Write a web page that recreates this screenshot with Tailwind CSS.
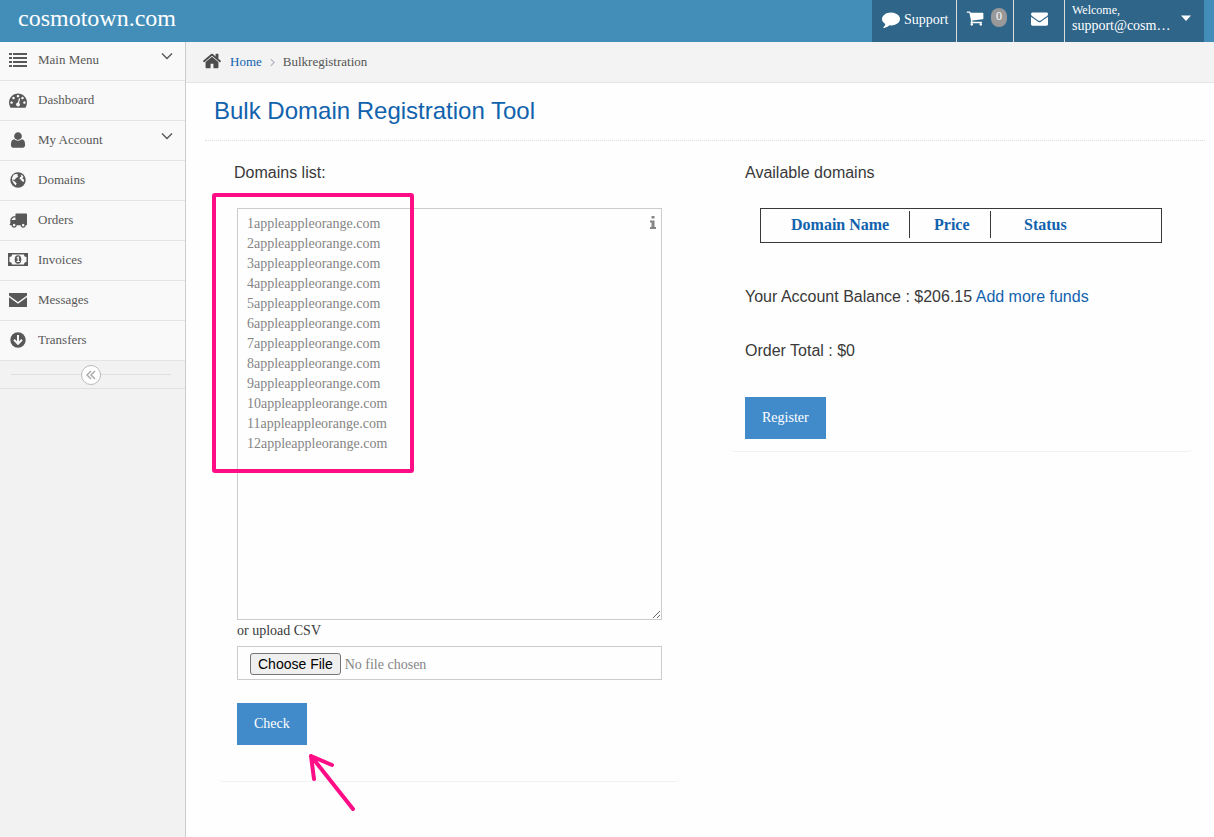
<!DOCTYPE html>
<html lang="en">

<head>
    <meta charset="UTF-8">
    <meta name="viewport" content="width=device-width, initial-scale=1.0">
    <title>Bulk Domain Registration Tool - cosmotown.com</title>
    <script src="https://cdn.jsdelivr.net/npm/@tailwindcss/browser@4"></script>
</head>

<body class="min-h-screen flex flex-col bg-[#fefefe] font-['Liberation_Serif',serif] text-[13px] leading-5 text-[#393939]">
    <!-- Top bar -->
    <header class="h-[42px] shrink-0 flex justify-between bg-[#438eb9] text-white pl-[18px] pr-[10px]">
        <a href="#" class="text-2xl leading-9">cosmotown.com</a>
        <nav class="flex bg-[#2e6589]">
            <a href="#" class="w-[84px] flex items-center pl-[10px] gap-1 pb-1 text-sm">
                <svg class="w-[18px] h-[18px]" viewBox="0 0 1792 1792" fill="currentColor"><path d="M1792 896q0 174-120 321.5t-326 233-450 85.5q-70 0-145-8-198 175-460 242-49 14-114 22-17 2-30.5-9t-17.5-29v-1q-3-4-.5-12t2-10 4.5-9.5l6-9 7-8.5 8-9q7-8 31-34.5t34.5-38 31-39.5 32.5-51 27-59 26-76q-157-89-247.5-220t-90.5-281q0-130 71-248.5t191-204.5 286-136.5 348-50.5q244 0 450 85.5t326 233 120 321.5z"/></svg>
                <span class="pt-px">Support</span>
            </a>
            <a href="#" class="w-[57px] flex items-center border-l border-[#ddd] pl-[9px] gap-[7px] pb-1.5">
                <svg class="w-[18px] h-[18px]" viewBox="0 0 1792 1792" fill="currentColor"><path d="M704 1536q0 52-38 90t-90 38-90-38-38-90 38-90 90-38 90 38 38 90zm896 0q0 52-38 90t-90 38-90-38-38-90 38-90 90-38 90 38 38 90zm128-1088v512q0 24-16.5 42.5t-40.5 21.5l-1044 122q13 60 13 70 0 16-24 64h920q26 0 45 19t19 45-19 45-45 19h-1024q-26 0-45-19t-19-45q0-11 8-31.5t16-36 21.5-40 15.5-29.5l-177-823h-204q-26 0-45-19t-19-45 19-45 45-19h256q16 0 28.5 6.5t19.5 15.5 13 24.5 8 26 5.5 29.5 4.5 26h1201q26 0 45 19t19 45z"/></svg>
                <span class="w-4 h-[19px] mb-0.5 rounded-full bg-[#999] text-center text-xs leading-4">0</span>
            </a>
            <a href="#" aria-label="Messages" class="w-[51px] flex items-center justify-center border-l border-[#ddd] pb-1.5">
                <svg class="w-[17px] h-[17px]" viewBox="0 0 1792 1792" fill="currentColor"><path d="M1792 710v794q0 66-47 113t-113 47h-1472q-66 0-113-47t-47-113v-794q44 49 101 87 362 246 497 345 57 42 92.5 65.5t94.5 48 110 24.5h2q51 0 110-24.5t94.5-48 92.5-65.5q170-123 498-345 57-39 100-87zm0-294q0 79-49 151t-122 123q-376 261-468 325-10 7-42.5 31t-54 38.5-52 32.5-57.5 27-50 9h-2q-23 0-50-9t-57.5-27-52-32.5-54-38.5-42.5-31q-91-64-262-182.5t-205-142.5q-62-42-117-115.5t-55-136.5q0-78 41.5-130t118.5-52h1472q65 0 112.5 47t47.5 113z"/></svg>
            </a>
            <button class="w-[140px] flex items-center justify-between border-l border-[#ddd] pl-[7px] pr-3 pb-1.5 text-left">
                <span><small class="block text-xs leading-4">Welcome,</small><span class="block text-sm leading-4">support@cosm…</span></span>
                <svg class="w-[10px] h-[6px] mr-px" viewBox="0 0 10 6" fill="currentColor"><path d="M0 .5h10L5 6z"/></svg>
            </button>
        </nav>
    </header>

    <div class="flex grow">
        <!-- Sidebar -->
        <aside class="w-[186px] shrink-0 bg-[#f2f2f2] border-r border-[#ccc]">
            <ul class="text-[#585858]">
                <li class="h-[39px] border-b border-[#e5e5e5] bg-[#f9f9f9]">
                    <a href="#" class="h-full flex items-center pl-[9px] pr-3 pb-0.5">
                        <svg class="w-[18px] mr-[11px]" viewBox="0 0 18 14" fill="currentColor"><path d="M0 0h3v2H0zM4 0h14v2H4zM0 4h3v2H0zM4 4h14v2H4zM0 8h3v2H0zM4 8h14v2H4zM0 12h3v2H0zM4 12h14v2H4z"/></svg>
                        <span class="grow">Main Menu</span>
                        <svg class="w-3 h-3 mb-2" viewBox="0 0 12 12" fill="none" stroke="currentColor" stroke-width="1.4"><path d="M1 3.5l5 5 5-5"/></svg>
                    </a>
                </li>
                <li class="h-10 border-b border-[#e5e5e5] bg-[#f9f9f9]">
                    <a href="#" class="h-full flex items-center pl-[9px] pr-3 pb-0.5">
                        <svg class="w-[18px] h-[18px] mr-[11px]" viewBox="0 0 1792 1792" fill="currentColor"><path d="M384 1152q0-53-37.5-90.5t-90.5-37.5-90.5 37.5-37.5 90.5 37.5 90.5 90.5 37.5 90.5-37.5 37.5-90.5zm192-448q0-53-37.5-90.5t-90.5-37.5-90.5 37.5-37.5 90.5 37.5 90.5 90.5 37.5 90.5-37.5 37.5-90.5zm428 481l101-382q6-26-7.5-48.5t-38.5-29.5-48 6.5-30 39.5l-101 382q-60 5-107 43.5t-63 98.5q-20 77 20 146t117 89 146-20 89-117q16-60-6-117t-72-91zm660-33q0-53-37.5-90.5t-90.5-37.5-90.5 37.5-37.5 90.5 37.5 90.5 90.5 37.5 90.5-37.5 37.5-90.5zm-640-640q0-53-37.5-90.5t-90.5-37.5-90.5 37.5-37.5 90.5 37.5 90.5 90.5 37.5 90.5-37.5 37.5-90.5zm448 192q0-53-37.5-90.5t-90.5-37.5-90.5 37.5-37.5 90.5 37.5 90.5 90.5 37.5 90.5-37.5 37.5-90.5zm320 448q0 261-141 483-19 29-54 29h-1402q-35 0-54-29-141-221-141-483 0-182 71-348t191-286 286-191 348-71 348 71 286 191 191 286 71 348z"/></svg>
                        <span class="grow">Dashboard</span>
                    </a>
                </li>
                <li class="h-10 border-b border-[#e5e5e5] bg-[#f9f9f9]">
                    <a href="#" class="h-full flex items-center pl-[9px] pr-3 pb-0.5">
                        <svg class="w-[18px] h-[18px] mr-[11px]" viewBox="0 0 1792 1792" fill="currentColor"><path d="M1600 1399q0 109-62.5 187t-150.5 78h-982q-88 0-150.5-78t-62.5-187q0-85 8.5-160.5t31.5-152 58.5-131 94-89 134.5-34.5q131 128 377 128t377-128q76 0 134.5 34.5t94 89 58.5 131 31.5 152 8.5 160.5zm-320-887q0 159-112.5 271.5t-271.5 112.5-271.5-112.5-112.5-271.5 112.5-271.5 271.5-112.5 271.5 112.5 112.5 271.5z"/></svg>
                        <span class="grow">My Account</span>
                        <svg class="w-3 h-3 mb-2" viewBox="0 0 12 12" fill="none" stroke="currentColor" stroke-width="1.4"><path d="M1 3.5l5 5 5-5"/></svg>
                    </a>
                </li>
                <li class="h-10 border-b border-[#e5e5e5] bg-[#f9f9f9]">
                    <a href="#" class="h-full flex items-center pl-[9px] pr-3 pb-0.5">
                        <svg class="w-[18px] h-[18px] mr-[11px]" viewBox="0 0 18 18"><circle cx="9" cy="9" r="7.7" fill="#585858"/><path d="M4.5 3.8L7 3l2 .2L8.200 4.400l1.300.600L8 6.500 6.500 7.400l-.5 1.400-1.500-.3L4 9.600l1.800 1 1.800 1.600-.8 2.200-1.800-1.600L3.400 10 3 7zM11.500 3.400l2 1L14.500 6l-1.200 1.200 1.800 1.600-.4 2.200-1.700-.7-1.200-1.800L10.500 8l.5-1.800 1.400-.8z" fill="#f9f9f9"/></svg>
                        <span class="grow">Domains</span>
                    </a>
                </li>
                <li class="h-10 border-b border-[#e5e5e5] bg-[#f9f9f9]">
                    <a href="#" class="h-full flex items-center pl-[9px] pr-3 pb-0.5">
                        <svg class="w-[18px] h-[18px] mr-[11px]" viewBox="0 0 1792 1792" fill="currentColor"><path d="M640 1408q0-52-38-90t-90-38-90 38-38 90 38 90 90 38 90-38 38-90zm-384-512h384v-256h-158q-13 0-22 9l-195 195q-9 9-9 22v30zm1280 512q0-52-38-90t-90-38-90 38-38 90 38 90 90 38 90-38 38-90zm256-1088v1024q0 15-4 26.5t-13.5 18.5-16.5 11.5-23.5 6-22.5 2-25.5 0-22.5-.5q0 106-75 181t-181 75-181-75-75-181h-384q0 106-75 181t-181 75-181-75-75-181h-64q-3 0-22.5.5t-25.5 0-22.5-2-23.5-6-16.5-11.5-13.5-18.5-4-26.5q0-26 19-45t45-19v-320q0-8-.5-35t0-38 2.5-34.5 6.5-37 14-30.5 22.5-30l198-198q19-19 50.5-32t58.5-13h160v-192q0-26 19-45t45-19h1024q26 0 45 19t19 45z"/></svg>
                        <span class="grow">Orders</span>
                    </a>
                </li>
                <li class="h-10 border-b border-[#e5e5e5] bg-[#f9f9f9]">
                    <a href="#" class="h-full flex items-center pl-2 pr-3 pb-0.5">
                        <svg class="w-5 h-[13px] mr-[10px]" viewBox="0 0 20 13"><path d="M0 0h20v13H0z" fill="#585858"/><path d="M4 1.500h12a2.500 2.500 0 0 0 2.500 2.500v5A2.500 2.500 0 0 0 16 11.500H4A2.500 2.500 0 0 0 1.500 9V4A2.500 2.500 0 0 0 4 1.500z" fill="#f9f9f9"/><ellipse cx="10" cy="6.500" rx="3.300" ry="4.300" fill="#585858"/><path d="M8.500 4.800L10 3.600h.9V8h1v1H8.600V8h1V5.200l-.6.400z" fill="#f9f9f9"/></svg>
                        <span class="grow">Invoices</span>
                    </a>
                </li>
                <li class="h-10 border-b border-[#e5e5e5] bg-[#f9f9f9]">
                    <a href="#" class="h-full flex items-center pl-[9px] pr-3 pb-0.5">
                        <svg class="w-[18px] h-[14px] mr-[11px]" viewBox="0 0 18 14" fill="currentColor"><path d="M0 0h18v2.400L9 9 0 2.400zM0 4.200l9 6.600 9-6.600V14H0z"/></svg>
                        <span class="grow">Messages</span>
                    </a>
                </li>
                <li class="h-10 border-b border-[#e5e5e5] bg-[#f9f9f9]">
                    <a href="#" class="h-full flex items-center pl-[9px] pr-3 pb-0.5">
                        <svg class="w-[18px] h-[18px] mr-[11px]" viewBox="0 0 18 18"><circle cx="9" cy="9" r="7.700" fill="#585858"/><path d="M9 4v8.500M5 8.800l4 4 4-4" fill="none" stroke="#f9f9f9" stroke-width="2"/></svg>
                        <span class="grow">Transfers</span>
                    </a>
                </li>
            </ul>
            <!-- Collapse toggle -->
            <div class="h-7 flex items-center border-b border-[#e0e0e0] pl-[11px] pr-[14px]">
                <span class="grow h-px bg-[#e0e0e0]"></span>
                <button aria-label="Collapse sidebar" class="w-5 h-5 flex items-center justify-center rounded-full border border-[#bbb] bg-white text-[#aaa]">
                    <svg class="w-[10px] h-[10px]" viewBox="0 0 10 10" fill="none" stroke="currentColor" stroke-width="1.500"><path d="M5 1L1 5l4 4M9 1L5 5l4 4"/></svg>
                </button>
                <span class="grow h-px bg-[#e0e0e0]"></span>
            </div>
        </aside>

        <main class="grow min-w-0">
            <!-- Breadcrumbs -->
            <nav class="h-[41px] flex items-center bg-[#f3f3f3] border-b border-[#e5e5e5] pl-4">
                <svg class="w-5 h-5 mr-2 mb-0.5" viewBox="0 0 1792 1792" fill="#4c4c4c"><path d="M1472 992v480q0 26-19 45t-45 19h-384v-384h-256v384h-384q-26 0-45-19t-19-45v-480q0-1 .5-3t.5-3l575-474 575 474q1 2 1 6zm223-69l-62 74q-8 9-21 11h-3q-13 0-21-7l-692-577-692 577q-12 8-24 7-13-2-21-11l-62-74q-8-10-7-23.500t11-21.500l719-599q32-26 76-26t76 26l244 204v-195q0-14 9-23t23-9h192q14 0 23 9t9 23v408l219 182q10 8 11 21.500t-7 23.500z"/></svg>
                <a href="#" class="text-[#1162ad]">Home</a>
                <svg class="w-[5px] h-[9px] mx-2" viewBox="0 0 6 10" fill="none" stroke="#b2b6bf" stroke-width="1.500"><path d="M1 1l4 4-4 4"/></svg>
                <span class="text-[#555]">Bulkregistration</span>
            </nav>

            <h1 class="ml-[19px] mr-[9px] h-[58px] pl-[9px] pt-3 border-b border-dotted border-[#ddd] font-['Liberation_Sans',sans-serif] text-2xl leading-8 text-[#1162ad]">Bulk Domain Registration Tool</h1>

            <div class="grid grid-cols-2 items-start gap-[51px] pl-[33px] pr-[22px]">
                <!-- Domains form -->
                <form class="relative pt-5 px-[18px] pb-9 border-b border-[#f2f2f2] rounded-b">
                    <label for="domains" class="block -ml-[3px] mb-[23px] font-['Liberation_Sans',sans-serif] text-base">Domains list:</label>
                    <div class="relative">
                        <textarea id="domains" spellcheck="false" class="block w-full h-[412px] border border-[#ccc] bg-[#fefefe] px-[9px] py-[5px] text-sm leading-5 text-[#858585]">1appleappleorange.com
2appleappleorange.com
3appleappleorange.com
4appleappleorange.com
5appleappleorange.com
6appleappleorange.com
7appleappleorange.com
8appleappleorange.com
9appleappleorange.com
10appleappleorange.com
11appleappleorange.com
12appleappleorange.com</textarea>
                        <svg class="absolute top-2 right-[6px] w-[6px] h-[13px]" viewBox="0 0 6 13" fill="#858585"><path d="M1.500 0h3v2.500h-3zM0 4.500h4.500v6.500H6v2H0v-2h1.500V6.500H0z"/></svg>
                    </div>
                    <label for="csv" class="block mb-1 text-sm leading-[22px]">or upload CSV</label>
                    <input id="csv" type="file" class="block w-full h-[34px] border border-[#ccc] px-3 py-1.5 text-sm leading-5 text-[#858585] file:h-[22px] file:mr-1 file:px-[7px] file:rounded-[3px] file:border file:border-[#767676] file:bg-[#efefef] file:font-['Liberation_Sans',sans-serif] file:text-sm file:leading-5 file:text-black">
                    <button type="button" class="mt-[23px] h-[42px] px-[17px] bg-[#428bca] text-sm text-white">Check</button>

                    <!-- Highlight box and pointer -->
                    <div class="absolute -left-[7px] top-[52px] w-[202px] h-[280px] border-4 border-[#ff0d86] rounded-[3px]"></div>
                    <svg class="absolute left-[88px] top-[609px] w-[52px] h-[62px]" viewBox="0 0 52 62" fill="none" stroke="#ff0d86" stroke-width="4" stroke-linecap="round" stroke-linejoin="round"><path d="M46 59L4 6M7 29L4 6l21 9"/></svg>
                </form>

                <!-- Availability and order -->
                <section class="pt-5 px-[14px] pb-3 border-b border-[#f2f2f2] rounded-b font-['Liberation_Sans',sans-serif] text-base">
                    <h2 class="mb-[23px] leading-6">Available domains</h2>
                    <div class="pl-[15px] pr-4 font-['Liberation_Serif',serif]">
                        <table class="w-full table-fixed border-separate border-spacing-x-0 border-spacing-y-[2px] border border-[#393939] pb-[2px] text-left leading-[27px] text-[#1162ad]">
                            <thead>
                                <tr>
                                    <th class="w-[149px] pl-[30px] border-r border-[#393939]">Domain Name</th>
                                    <th class="w-[81px] pl-6 border-r border-[#393939]">Price</th>
                                    <th class="pl-[33px]">Status</th>
                                </tr>
                            </thead>
                        </table>
                    </div>
                    <p class="mt-[42px] leading-6">Your Account Balance : $206.15 <a href="#" class="text-[#1162ad]">Add more funds</a></p>
                    <p class="mt-[30px] leading-6">Order Total : $0</p>
                    <button type="button" class="mt-[34px] h-[42px] px-[17px] bg-[#428bca] font-['Liberation_Serif',serif] text-sm text-white">Register</button>
                </section>
            </div>
        </main>
    </div>
</body>

</html>
